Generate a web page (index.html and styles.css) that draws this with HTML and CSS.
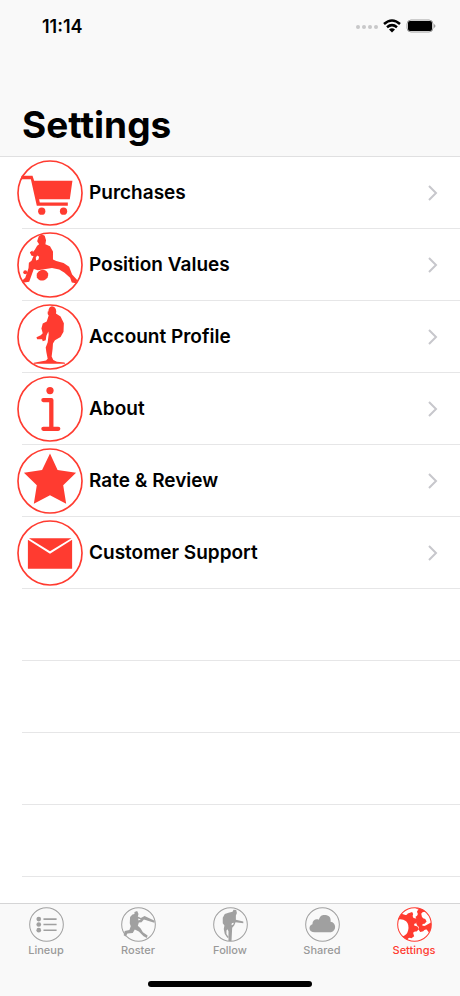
FILE: index.html
```html
<!DOCTYPE html>
<html lang="en">
<head>
    <meta charset="utf-8"/>
    <meta name="viewport" content="width=device-width, initial-scale=1"/>
    <title>Settings</title>
    <link rel="stylesheet" href="styles.css">
</head>
<body>

<header class="header">
    <div class="status">
        <span class="time">11:14</span>
        <div class="status-icons">
            <svg width="22" height="6" viewBox="0 0 22 6" fill="#c8c8c9">
                <circle cx="2" cy="4" r="2"/><circle cx="8" cy="4" r="2"/><circle cx="14" cy="4" r="2"/><circle cx="20" cy="4" r="2"/>
            </svg>
            <svg width="18" height="14" viewBox="0 0 18 14">
                <path d="M1 5Q9-2 17 5M4 8.200Q9 4 14 8.200" fill="none" stroke="#000" stroke-width="2.500"/>
                <path d="M6 10.500Q9 8 12 10.500L9 13.500Z"/>
            </svg>
            <svg width="30" height="14" viewBox="0 0 30 14">
                <rect x="1" y="1" width="26" height="12" rx="4" fill="none" stroke="#a0a0a0"/>
                <rect x="2" y="2" width="24" height="10" rx="2"/>
                <path d="M28 5Q31 7 28 9Z" fill="#a0a0a0"/>
            </svg>
        </div>
    </div>
    <h1>Settings</h1>
</header>

<main>
    <ul class="list">
        <li>
            <a href="#purchases">
                <svg class="icon" viewBox="21 12 200 200">
                    <circle class="ring" cx="121" cy="112" r="97"/>
                    <path d="M35 60H68L73 75H189L181 131H88L90 141H175V151H81L63 70H32Z"/>
                    <circle cx="96" cy="167" r="11"/><circle cx="162" cy="167" r="11"/>
                </svg>
                <span>Purchases</span>
                <svg class="chevron" viewBox="0 0 10 16"><path d="M1 1L8 8L1 15"/></svg>
            </a>
        </li>
        <li>
            <a href="#positions">
                <svg class="icon" viewBox="21 11 200 200">
                    <circle class="ring" cx="121" cy="111" r="97"/>
                    <path d="M82 39L87 24Q94 16 105 22L109 36L107 48L121 54L130 70L130 94L140 99L162 105L179 116L188 140L204 157L200 166L187 164L182 150L164 134L149 125L127 120L84 127L72 123L67 137L58 162L38 165L37 158L46 150L56 120L57 104L65 98L71 84L65 80L61 72L68 73L75 65L82 53L88 48L84 42Z"/>
                    <ellipse cx="98" cy="142" rx="18" ry="16" transform="rotate(-20 98 142)"/>
                    <path d="M82 82L78 89L79 97L86 94L88 86Z" fill="#fff"/>
                    <circle cx="46" cy="133" r="6"/>
                    <path d="M60 72L68 67L70 76L79 73L76 84L65 83Z"/>
                </svg>
                <span>Position Values</span>
                <svg class="chevron" viewBox="0 0 10 16"><path d="M1 1L8 8L1 15"/></svg>
            </a>
        </li>
        <li>
            <a href="#account">
                <svg class="icon" viewBox="21 12 200 200">
                    <circle class="ring" cx="121" cy="112" r="97"/>
                    <path d="M116 35Q117 20 127 19Q139 20 140 35L139 41L153 50L163 70L162 96L153 112L136 122L130 132L129 147L126 171L131 182L142 187L165 189L167 193H72V190L109 183L114 178L110 158L108 144L114 128L117 104L116 95L110 108L108 122L99 125L97 119L82 119L80 113L93 107L99 101L95 86L99 71L111 65L117 47L114 42L114 35Z"/>
                </svg>
                <span>Account Profile</span>
                <svg class="chevron" viewBox="0 0 10 16"><path d="M1 1L8 8L1 15"/></svg>
            </a>
        </li>
        <li>
            <a href="#about">
                <svg class="icon" viewBox="21 12 200 200">
                    <circle class="ring" cx="121" cy="112" r="97"/>
                    <circle cx="121" cy="56" r="11"/>
                    <path class="info" d="M101 85H125V172M101 172H146"/>
                </svg>
                <span>About</span>
                <svg class="chevron" viewBox="0 0 10 16"><path d="M1 1L8 8L1 15"/></svg>
            </a>
        </li>
        <li>
            <a href="#review">
                <svg class="icon" viewBox="21 12 200 200">
                    <circle class="ring" cx="121" cy="112" r="97"/>
                    <path d="M121 29L144 79L200 87L161 125L170 181L121 155L72 181L81 125L42 87L97 79Z"/>
                </svg>
                <span>Rate &amp; Review</span>
                <svg class="chevron" viewBox="0 0 10 16"><path d="M1 1L8 8L1 15"/></svg>
            </a>
        </li>
        <li>
            <a href="#support">
                <svg class="icon" viewBox="21 229 200 200">
                    <circle class="ring" cx="121" cy="329" r="97"/>
                    <path d="M57 284H186L121 324ZM54 289L121 331L188 289V377H54Z"/>
                </svg>
                <span>Customer Support</span>
                <svg class="chevron" viewBox="0 0 10 16"><path d="M1 1L8 8L1 15"/></svg>
            </a>
        </li>
        <li></li>
        <li></li>
        <li></li>
        <li></li>
    </ul>
</main>

<nav class="tabs">
    <div class="tab-row">
        <a href="#lineup">
            <svg viewBox="86 36 104 104">
                <circle class="ring" cx="138" cy="88" r="50"/>
                <circle cx="115" cy="72" r="7"/><circle cx="115" cy="88" r="7"/><circle cx="115" cy="105" r="7"/>
                <path class="lines" d="M129 72H168M129 88H168M129 105H168"/>
            </svg>
            <span>Lineup</span>
        </a>
        <a href="#roster">
            <svg viewBox="363 36 104 104">
                <circle class="ring" cx="415" cy="88" r="50"/>
                <path d="M403 51L411 48L415 57L413 64L422 69L433 63L463 77L462 83L431 73L424 81L416 82L413 92L421 99L428 111L442 121L440 128L430 123L416 109L404 103L398 113L382 115L377 124L371 120L374 107L388 104L392 93L389 84L390 66L397 58L403 57Z"/>
                <path d="M414 70L422 73L415 76Z" fill="#fff"/>
            </svg>
            <span>Roster</span>
        </a>
        <a href="#follow">
            <svg viewBox="97 36 104 104">
                <circle class="ring" cx="149" cy="88" r="50"/>
                <path d="M155 50L158 44L166 45L168 54L165 61L165 74L187 79V84L164 81L160 91L154 98L152 137H143L143 108L140 102L137 106L137 116L143 125L140 128L132 116L129 101L131 91L126 84V68L132 57L143 53Z"/>
                <path d="M159 83L153 84L152 90L157 88Z" fill="#fff"/>
            </svg>
            <span>Follow</span>
        </a>
        <a href="#shared">
            <svg viewBox="372 36 104 104">
                <circle class="ring" cx="424" cy="88" r="50"/>
                <path d="M401 111C382 111 381 91 394 87C394 75 405 70 413 74C416 61 426 58 433 60C444 61 450 69 448 80C465 82 467 107 449 111Z"/>
            </svg>
            <span>Shared</span>
        </a>
        <a href="#settings" class="active">
            <svg viewBox="649 36 104 104">
                <circle class="ring" cx="701" cy="88" r="50"/>
                <path d="M654 70L662 56L672 59Q678 61 681 55L694 51L697 57Q693 64 698 69L709 71L712 78L706 84Q699 84 700 91L710 94L714 102L707 109Q698 107 697 113L700 123L692 129Q684 124 679 134L665 124Q679 119 682 106Q686 87 676 78Q666 71 654 73Z"/>
                <path d="M703 38L725 43L735 51Q725 48 721 56L723 65Q725 71 733 72L737 79L731 86Q723 85 724 91Q732 94 738 89L750 82L750 100L744 112L737 103Q730 102 727 108L718 110L713 103Q716 94 709 91L706 84Q712 78 707 73L704 65Q713 61 710 54Q706 48 713 44Z"/>
            </svg>
            <span>Settings</span>
        </a>
    </div>
    <div class="home-bar"></div>
</nav>

</body>
</html>
```
FILE: styles.css
```css
* {
    box-sizing: border-box;
}

body {
    margin: 0;
    min-height: 100vh;
    display: flex;
    flex-direction: column;
    background: #fff;
    color: #000;
    font-family: Inter, "Liberation Sans", sans-serif;
}

a {
    color: inherit;
    text-decoration: none;
}

svg {
    display: block;
    flex: none;
}

/* header */
.header {
    background: #f9f9f9;
    border-bottom: 1px solid #e0e0e1;
    padding: 14px 24px 7px 22px;
}

.status {
    display: flex;
    justify-content: space-between;
    align-items: center;
    height: 24px;
    padding-left: 20px;
}

.time {
    font-size: 18px;
    font-weight: 600;
}

.status-icons {
    display: flex;
    align-items: center;
    gap: 5px;
}

h1 {
    margin: 63px 0 0;
    font-size: 37px;
    line-height: 48px;
    font-weight: 700;
}

/* list */
main {
    flex: 1;
}

.list {
    list-style: none;
    margin: 0;
    padding: 0;
}

.list li {
    height: 72px;
    background: linear-gradient(#e6e6e7, #e6e6e7) 22px 100% / 100% 1px no-repeat;
}

.list a {
    display: flex;
    align-items: center;
    height: 71px;
    gap: 6px;
    padding: 0 22px 0 17px;
    font-size: 19px;
    font-weight: 600;
}

.list span {
    flex: 1;
}

.icon {
    width: 66px;
    height: 66px;
    fill: #ff3b30;
}

.ring {
    fill: none;
    stroke: #ff3b30;
    stroke-width: 5;
}

.info {
    fill: none;
    stroke: #ff3b30;
    stroke-width: 13;
    stroke-linecap: round;
    stroke-linejoin: round;
}

.chevron {
    width: 10px;
    height: 16px;
    fill: none;
    stroke: #c7c7cc;
    stroke-width: 2;
}

/* tab bar */
.tabs {
    background: #f9f9f9;
    border-top: 1px solid #d5d5d6;
    padding: 3px 0 9px;
}

.tab-row {
    display: flex;
}

.tab-row a {
    flex: 1;
    display: flex;
    flex-direction: column;
    align-items: center;
    font-size: 11px;
    line-height: 16px;
    font-weight: 500;
    color: #999;
}

.tab-row svg {
    width: 35px;
    height: 35px;
    fill: #a0a0a0;
}

.tab-row .ring {
    stroke: #a0a0a0;
    stroke-width: 3;
}

.lines {
    stroke: #a0a0a0;
    stroke-width: 5;
}

.tab-row .active {
    color: #ff3b30;
}

.active svg {
    fill: #ff3b30;
}

.tab-row .active .ring {
    fill: #fff;
    stroke: #ff3b30;
}

.home-bar {
    width: 164px;
    height: 6px;
    margin: 23px auto 0;
    border-radius: 3px;
    background: #000;
}
```
